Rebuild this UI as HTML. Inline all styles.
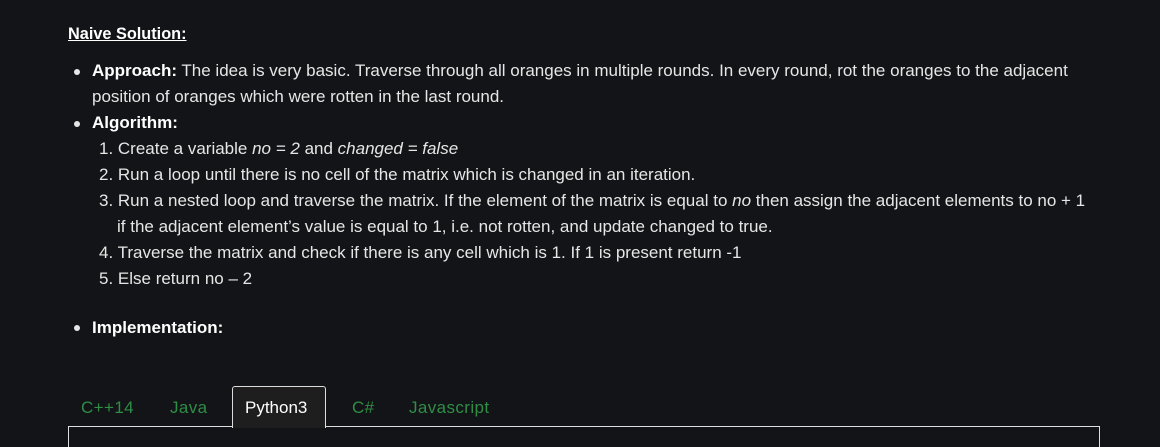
<!DOCTYPE html>
<html><head><style>
body{margin:0;width:1160px;height:436px;background:#131417;color:#e6e6e6;font-family:"Liberation Sans",sans-serif;font-size:17px;overflow:hidden;position:relative}
.l{position:absolute;white-space:nowrap;line-height:26px}
b{font-weight:bold;color:#fff}
.dot{position:absolute;width:6px;height:6px;border-radius:50%;background:#e6e6e6}
.tab{position:absolute;top:398px;color:#2f8d46;font-size:17px;letter-spacing:0.4px}
</style></head><body>
<div class="l" style="left:68px;top:21px;font-size:16.3px"><b style="text-decoration:underline">Naive Solution:</b></div>
<div class="dot" style="left:74px;top:69px"></div>
<div class="l" style="left:92px;top:58px"><b>Approach:</b> The idea is very basic. Traverse through all oranges in multiple rounds. In every round, rot the oranges to the adjacent</div>
<div class="l" style="left:92px;top:84px">position of oranges which were rotten in the last round.</div>
<div class="dot" style="left:74px;top:121px"></div>
<div class="l" style="left:92px;top:110px"><b>Algorithm:</b></div>
<div class="l" style="left:99px;top:136px">1. Create a variable <i>no = 2</i> and <i>changed = false</i></div>
<div class="l" style="left:99px;top:162px">2. Run a loop until there is no cell of the matrix which is changed in an iteration.</div>
<div class="l" style="left:99px;top:188px">3. Run a nested loop and traverse the matrix. If the element of the matrix is equal to <i>no</i> then assign the adjacent elements to no + 1</div>
<div class="l" style="left:117px;top:214px">if the adjacent element’s value is equal to 1, i.e. not rotten, and update changed to true.</div>
<div class="l" style="left:99px;top:240px">4. Traverse the matrix and check if there is any cell which is 1. If 1 is present return -1</div>
<div class="l" style="left:99px;top:266px">5. Else return no – 2</div>
<div class="dot" style="left:74px;top:325px"></div>
<div class="l" style="left:92px;top:315px"><b>Implementation:</b></div>
<div style="position:absolute;left:68px;top:426px;width:1030px;height:20px;border:1px solid #ddd;border-bottom:none"></div>
<div style="position:absolute;left:232px;top:386px;width:92px;height:41px;background:#1e1e1e;border:1px solid #ddd;border-bottom:none;border-radius:3px 3px 0 0"></div>
<div class="tab" style="left:81px">C++14</div>
<div class="tab" style="left:170px">Java</div>
<div class="tab" style="left:245px;color:#fff;letter-spacing:0">Python3</div>
<div class="tab" style="left:352px">C#</div>
<div class="tab" style="left:409px">Javascript</div>
</body></html>
